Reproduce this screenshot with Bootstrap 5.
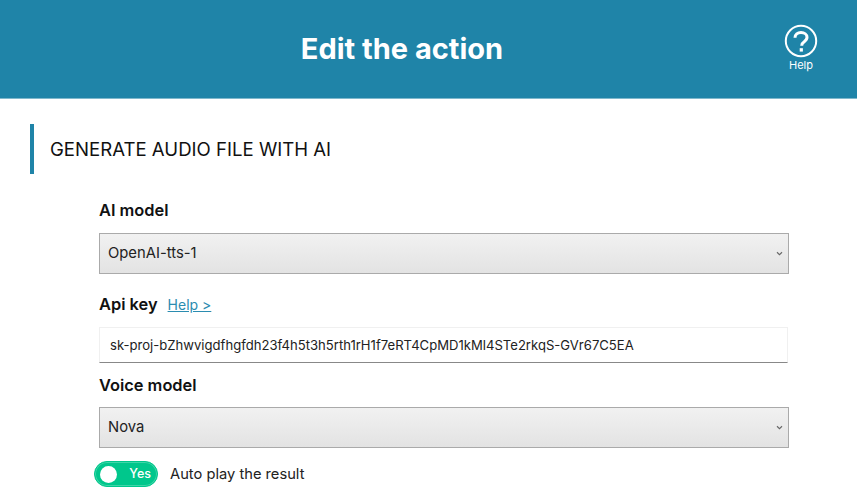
<!DOCTYPE html>
<html lang="en">
<head>
  <meta charset="UTF-8">
  <title>Edit the action</title>
  <link href="https://cdn.jsdelivr.net/npm/bootstrap@5.3.3/dist/css/bootstrap.min.css" rel="stylesheet">
  <style>
    body { font-family: Inter, "Open Sans", sans-serif; color: #111; overflow: hidden; }
    .top-head { background: #1f84a8; height: 99px; border-bottom: 1px solid #7fb8cc; padding-left: 20px; padding-right: 39px; }
    .top-title { font-size: 29px; font-weight: 700; color: #fff; margin: 0; }
    .help-btn { color: #fff; font-size: 11px; line-height: 1; width: 34px; padding-bottom: 3px; }
    .help-btn svg { display: block; margin-bottom: 2px; }
    .sec-title { border-left: 4px solid #1f84a8; margin: 25px 0 0 30px; height: 50px; padding-left: 16px; font-size: 18.6px; font-weight: 400; }
    .form-zone { padding: 25px 68px 0 99px; }
    .lbl { font-size: 16.4px; font-weight: 600; line-height: 22px; margin: 0; }
    .lbl-model { margin-bottom: 12px; }
    .api-row { margin-top: 19px; margin-bottom: 12px; column-gap: 10px; }
    .lbl-voice { margin-top: 11px; margin-bottom: 11px; }
    .sel-grey.form-select {
      height: 41px; border-radius: 0; border: 1px solid #aaa; color: #222; font-size: 14.8px; padding: 0 30px 0 8px;
      background: url("data:image/svg+xml,%3csvg xmlns='http://www.w3.org/2000/svg' viewBox='0 0 8 6'%3e%3cpath fill='none' stroke='%23666' stroke-width='1.3' d='M1 1.5l3 3 3-3'/%3e%3c/svg%3e") no-repeat right 5px center / 7px 5px, linear-gradient(#f1f1f1, #e3e3e3);
    }
    .key-input.form-control {
      height: 36px; width: 689px; border-radius: 0; border: 1px solid #f0f0f0; border-bottom-color: #888; color: #222; font-size: 13.1px; padding: 0 10px;
    }
    .help-link { color: #2b8cb0; font-size: 14px; }
    .toggle-row { margin-top: 13px; }
    .yes-switch { width: 64px; height: 26px; background: #00c78c; border-radius: 13px; color: #fff; font-size: 12.5px; font-weight: 500; margin-left: -5px; padding: 0 6px 0 5px; border: 1px solid #00c78c; box-shadow: inset 0 0 0 1px #3fd5a8; }
    .yes-knob { width: 17px; height: 17px; background: #fff; border-radius: 50%; }
    .auto-txt { font-size: 14.7px; color: #222; }
  </style>
</head>
<body>

  <header class="top-head d-flex align-items-center justify-content-between">
    <div class="flex-grow-1 text-center">
      <h1 class="top-title">Edit the action</h1>
    </div>
    <div class="help-btn text-center">
      <svg width="34" height="34" viewBox="0 0 34 34">
        <circle cx="17" cy="17" r="15.2" fill="none" stroke="#fff" stroke-width="2"/>
        <path d="M11 13.8c0-3.3 2.6-5.2 6-5.2s6 1.9 6 4.7c0 2.1-1.1 3.2-2.8 4.4-1.8 1.2-2.5 2-2.5 4" fill="none" stroke="#fff" stroke-width="3"/>
        <rect x="15.7" y="24.2" width="3.2" height="3.4" fill="#fff"/>
      </svg>
      Help
    </div>
  </header>

  <h2 class="sec-title d-flex align-items-center">GENERATE AUDIO FILE WITH AI</h2>

  <form class="form-zone">
    <label class="lbl lbl-model d-block">AI model</label>
    <select class="form-select sel-grey">
      <option>OpenAI-tts-1</option>
    </select>

    <div class="api-row d-flex align-items-center">
      <label class="lbl">Api key</label>
      <a href="#" class="help-link">Help &gt;</a>
    </div>
    <input class="form-control key-input" type="text" value="sk-proj-bZhwvigdfhgfdh23f4h5t3h5rth1rH1f7eRT4CpMD1kMl4STe2rkqS-GVr67C5EA">

    <label class="lbl lbl-voice d-block">Voice model</label>
    <select class="form-select sel-grey">
      <option>Nova</option>
    </select>

    <div class="toggle-row d-flex align-items-center gap-2">
      <div class="yes-switch d-flex align-items-center justify-content-between">
        <span class="yes-knob"></span>
        <span>Yes</span>
      </div>
      <span class="auto-txt ms-1">Auto play the result</span>
    </div>
  </form>

</body>
</html>
